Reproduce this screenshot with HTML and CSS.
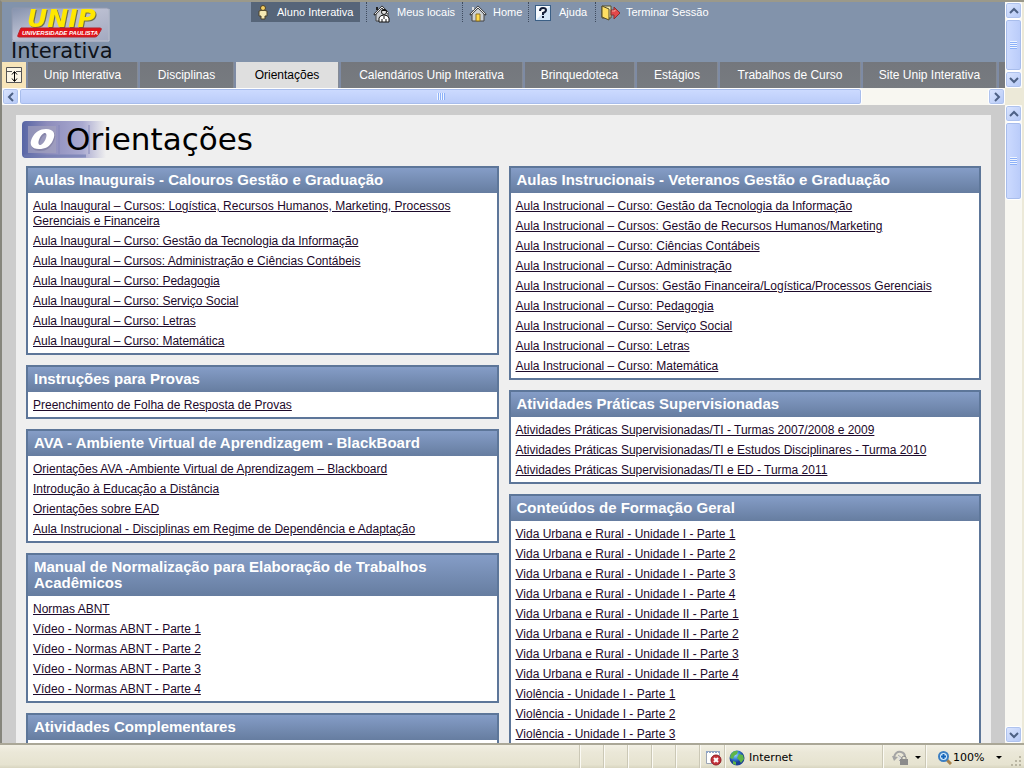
FILE: index.html
```html
<!DOCTYPE html>
<html lang="pt">
<head>
<meta charset="utf-8">
<title>UNIP Interativa - Orientações</title>
<link rel="stylesheet" href="styles.css">
</head>
<body>
<div class="top-frame">
  <div class="top-main">
    <header class="banner">
      <div class="brand">
        <svg class="brand-badge" width="99" height="36" viewBox="0 0 99 36" role="img" aria-label="UNIP Universidade Paulista">
          <defs><linearGradient id="bg1" x1="0" y1="0" x2="1" y2="1"><stop offset="0" stop-color="#8592ad"/><stop offset=".45" stop-color="#bcc0d2"/><stop offset="1" stop-color="#a3a9c0"/></linearGradient></defs>
          <rect x="1" y="1" width="97" height="33" rx="2" fill="url(#bg1)" stroke="#8f97ad"/>
          <path d="M1 34h97V2" fill="none" stroke="#c3c8d6"/>
          <text x="16" y="20" class="unip">UNIP</text>
          <path d="M10 21h79q2 0 1 2l-3 5q-1 2-3 2H8q-2 0-1-2l2-5z" fill="#e11219" stroke="#b5232c"/>
          <text x="11" y="28" class="paulista">UNIVERSIDADE PAULISTA</text>
        </svg>
        <span class="brand-name">Interativa</span>
      </div>
      <nav class="menu">
        <a class="menu-item menu-user" href="#">
          <svg width="12" height="16" viewBox="0 0 12 16"><path d="M2 7q4-2 8 0v5H8v3H4v-3H2z" fill="#f6e9b4" stroke="#4a4028"/><circle cx="6" cy="4" r="2.500" fill="#f5cf62" stroke="#4a4028"/></svg>
          <span>Aluno Interativa</span></a>
        <a class="menu-item menu-places" href="#">
          <svg width="18" height="18" viewBox="0 0 18 18"><path d="M3 8v8h12V8L9 2z" fill="#c9cdd2" stroke="#444"/><path d="M1 10l8-8 6 6" fill="none" stroke="#333" stroke-width="2"/><path d="M2 9l7-7 6 6" fill="none" stroke="#e8e8e8"/><path d="M4 2v3" stroke="#222" stroke-width="2"/><path d="M6 17v-4q1-3 5-3t5 3v4z" fill="#fff" stroke="#111"/><path d="M9 14v3M13 14v3M11 11v3" stroke="#111"/><circle cx="11" cy="7" r="2.500" fill="#e4e4e4" stroke="#111"/><path d="M8 6q3-4 6 0z" fill="#111"/></svg>
          <span>Meus locais</span></a>
        <a class="menu-item menu-home" href="#">
          <svg width="18" height="18" viewBox="0 0 18 18"><path d="M3 8v8h12V8L9 3z" fill="#ccd0d4" stroke="#444"/><path d="M1 10l8-8 8 8" fill="none" stroke="#444" stroke-width="2"/><path d="M2 9l7-7 7 7" fill="none" stroke="#e8e8e8"/><path d="M4 2v3" stroke="#ddd" stroke-width="2"/><path d="M7 9h4v7H7z" fill="#ffd94a" stroke="#8b7025"/></svg>
          <span>Home</span></a>
        <a class="menu-item menu-help" href="#">
          <svg width="16" height="16" viewBox="0 0 16 16"><rect x=".5" y=".5" width="15" height="15" fill="#d3e6f8" stroke="#3b5f85"/><path d="M1 1h14L1 15z" fill="#fff" opacity=".8"/><path d="M5 6q0-3 3-3t3 2q0 2-3 3v2" fill="none" stroke="#111c36" stroke-width="2"/><path d="M7 11h2v2H7z" fill="#111c36"/></svg>
          <span>Ajuda</span></a>
        <a class="menu-item menu-exit" href="#">
          <svg width="20" height="16" viewBox="0 0 20 16"><path d="M1 1h9v12H1z" fill="#eee9b5" stroke="#544c2a"/><path d="M1 1l7 3v11l-7-3z" fill="#ffdf62" stroke="#544c2a"/><path d="M10 5h3V2l6 6-6 6v-4h-3z" fill="#e3484a" stroke="#8a3030"/><path d="M11 6h3V5" fill="none" stroke="#f6aaa0"/></svg>
          <span>Terminar Sessão</span></a>
      </nav>
    </header>
    <nav class="tabs">
      <button class="tab-toggle" aria-label="Alternar cabeçalho"><svg width="18" height="18" viewBox="0 0 18 18"><path d="M1.500 1.500h15v15h-15z" fill="#fbf6e6" stroke="#555"/><path d="M1 5.500h6M11 5.500h6" stroke="#555"/><path d="M9.500 6v9M7 8.500l2.500-3 2.500 3M7 12.500l2.500 3 2.500-3" fill="none" stroke="#000"/></svg></button>
      <a class="tab tab-m" href="#">Unip Interativa</a>
      <a class="tab tab-s" href="#">Disciplinas</a>
      <a class="tab tab-m tab-on" href="#">Orientações</a>
      <a class="tab tab-xl" href="#">Calendários Unip Interativa</a>
      <a class="tab tab-m" href="#">Brinquedoteca</a>
      <a class="tab tab-xs" href="#">Estágios</a>
      <a class="tab tab-l" href="#">Trabalhos de Curso</a>
      <a class="tab tab-ml" href="#">Site Unip Interativa</a>
      <span class="tab-rest"></span>
    </nav>
    <div class="hscroll">
      <button class="sb" aria-label="Esquerda"><svg width="10" height="10" viewBox="0 0 10 10"><path d="M7 1L3 5l4 4"/></svg></button>
      <div class="htrack"><div class="hthumb"><i class="grip grip-h"></i></div></div>
      <button class="sb" aria-label="Direita"><svg width="10" height="10" viewBox="0 0 10 10"><path d="M3 1l4 4-4 4"/></svg></button>
    </div>
  </div>
  <div class="top-side">
    <div class="vscroll">
      <button class="sb" aria-label="Acima"><svg width="10" height="10" viewBox="0 0 10 10"><path d="M1 7l4-4 4 4"/></svg></button>
      <div class="vtrack"><div class="vthumb vthumb-full"><i class="grip"></i></div></div>
      <button class="sb" aria-label="Abaixo"><svg width="10" height="10" viewBox="0 0 10 10"><path d="M1 3l4 4 4-4"/></svg></button>
    </div>
    <div class="corner"></div>
  </div>
</div>
<div class="main-frame">
  <main class="page">
    <div class="sheet">
      <h1 class="title">
        <span class="title-tile"><svg width="84" height="37" viewBox="0 0 84 37"><defs><linearGradient id="bg2"><stop offset="0" stop-color="#5765a5"/><stop offset=".3" stop-color="#8d8cbb"/><stop offset=".72" stop-color="#a9a9d0"/><stop offset="1" stop-color="#efefef"/></linearGradient></defs><path d="M4 0h80v37H4q-4 0-4-4V4q0-4 4-4z" fill="url(#bg2)"/><rect x="6" y="5" width="28" height="27" fill="#a3a1bd" opacity=".7"/><path d="M37 4v29M67 4v29" stroke="#8486b9"/><path d="M2 35h62" stroke="#6c79af" stroke-width="3" opacity=".6"/><path fill-rule="evenodd" fill="#68668c" opacity=".4" d="M25 9c8 0 10 5 7 11-3 7-8 10-14 10-8 0-10-5-7-11 3-7 8-10 14-10zm-2 5c-3 0-8 10-4 11 4 0 8-11 4-11z"/><path fill-rule="evenodd" fill="#fff" d="M24 8c8 0 10 5 7 11-3 7-8 9-14 9-8 0-10-5-7-11 3-6 8-9 14-9zm-1 4c-4 0-9 11-5 12 4 0 9-11 5-12z"/></svg></span>
        <span class="title-text">Orientações</span>
      </h1>
      <div class="columns">
        <div class="column">
          <section class="panel"><h2>Aulas Inaugurais - Calouros Gestão e Graduação</h2><ul>
            <li><a href="#">Aula Inaugural – Cursos: Logística, Recursos Humanos, Marketing, Processos Gerenciais e Financeira</a></li>
            <li><a href="#">Aula Inaugural – Curso: Gestão da Tecnologia da Informação</a></li>
            <li><a href="#">Aula Inaugural – Cursos: Administração e Ciências Contábeis</a></li>
            <li><a href="#">Aula Inaugural – Curso: Pedagogia</a></li>
            <li><a href="#">Aula Inaugural – Curso: Serviço Social</a></li>
            <li><a href="#">Aula Inaugural – Curso: Letras</a></li>
            <li><a href="#">Aula Inaugural – Curso: Matemática</a></li></ul></section>
          <section class="panel"><h2>Instruções para Provas</h2><ul>
            <li><a href="#">Preenchimento de Folha de Resposta de Provas</a></li></ul></section>
          <section class="panel"><h2>AVA - Ambiente Virtual de Aprendizagem - BlackBoard</h2><ul>
            <li><a href="#">Orientações AVA -Ambiente Virtual de Aprendizagem – Blackboard</a></li>
            <li><a href="#">Introdução à Educação a Distância</a></li>
            <li><a href="#">Orientações sobre EAD</a></li>
            <li><a href="#">Aula Instrucional - Disciplinas em Regime de Dependência e Adaptação</a></li></ul></section>
          <section class="panel"><h2>Manual de Normalização para Elaboração de Trabalhos Acadêmicos</h2><ul>
            <li><a href="#">Normas ABNT</a></li>
            <li><a href="#">Vídeo - Normas ABNT - Parte 1</a></li>
            <li><a href="#">Vídeo - Normas ABNT - Parte 2</a></li>
            <li><a href="#">Vídeo - Normas ABNT - Parte 3</a></li>
            <li><a href="#">Vídeo - Normas ABNT - Parte 4</a></li></ul></section>
          <section class="panel panel-tall"><h2>Atividades Complementares</h2><ul></ul></section>
        </div>
        <div class="column">
          <section class="panel"><h2>Aulas Instrucionais - Veteranos Gestão e Graduação</h2><ul>
            <li><a href="#">Aula Instrucional – Curso: Gestão da Tecnologia da Informação</a></li>
            <li><a href="#">Aula Instrucional – Cursos: Gestão de Recursos Humanos/Marketing</a></li>
            <li><a href="#">Aula Instrucional – Curso: Ciências Contábeis</a></li>
            <li><a href="#">Aula Instrucional – Curso: Administração</a></li>
            <li><a href="#">Aula Instrucional – Cursos: Gestão Financeira/Logística/Processos Gerenciais</a></li>
            <li><a href="#">Aula Instrucional – Curso: Pedagogia</a></li>
            <li><a href="#">Aula Instrucional – Curso: Serviço Social</a></li>
            <li><a href="#">Aula Instrucional – Curso: Letras</a></li>
            <li><a href="#">Aula Instrucional – Curso: Matemática</a></li></ul></section>
          <section class="panel"><h2>Atividades Práticas Supervisionadas</h2><ul>
            <li><a href="#">Atividades Práticas Supervisionadas/TI - Turmas 2007/2008 e 2009</a></li>
            <li><a href="#">Atividades Práticas Supervisionadas/TI e Estudos Disciplinares - Turma 2010</a></li>
            <li><a href="#">Atividades Práticas Supervisionadas/TI e ED - Turma 2011</a></li></ul></section>
          <section class="panel"><h2>Conteúdos de Formação Geral</h2><ul>
            <li><a href="#">Vida Urbana e Rural - Unidade I - Parte 1</a></li>
            <li><a href="#">Vida Urbana e Rural - Unidade I - Parte 2</a></li>
            <li><a href="#">Vida Urbana e Rural - Unidade I - Parte 3</a></li>
            <li><a href="#">Vida Urbana e Rural - Unidade I - Parte 4</a></li>
            <li><a href="#">Vida Urbana e Rural - Unidade II - Parte 1</a></li>
            <li><a href="#">Vida Urbana e Rural - Unidade II - Parte 2</a></li>
            <li><a href="#">Vida Urbana e Rural - Unidade II - Parte 3</a></li>
            <li><a href="#">Vida Urbana e Rural - Unidade II - Parte 4</a></li>
            <li><a href="#">Violência - Unidade I - Parte 1</a></li>
            <li><a href="#">Violência - Unidade I - Parte 2</a></li>
            <li><a href="#">Violência - Unidade I - Parte 3</a></li></ul></section>
        </div>
      </div>
    </div>
  </main>
  <div class="vscroll">
    <button class="sb" aria-label="Acima"><svg width="10" height="10" viewBox="0 0 10 10"><path d="M1 7l4-4 4 4"/></svg></button>
    <div class="vtrack"><div class="vthumb"><i class="grip"></i></div></div>
    <button class="sb" aria-label="Abaixo"><svg width="10" height="10" viewBox="0 0 10 10"><path d="M1 3l4 4 4-4"/></svg></button>
  </div>
</div>
<footer class="status">
  <span class="cell"></span><span class="cell"></span><span class="cell"></span><span class="cell"></span><span class="cell"></span>
  <span class="cell cell-block"><svg width="17" height="16" viewBox="0 0 17 16"><path d="M1.500 1.500h13v12h-13z" fill="#fff" stroke="#9aa5b5"/><path d="M1 2h14" stroke="#8fa6c8" stroke-width="2" stroke-dasharray="2 1"/><circle cx="11" cy="10" r="5" fill="#c4343c" stroke="#8f1c22"/><path d="M9 8l4 4M13 8l-4 4" stroke="#fff" stroke-width="2"/></svg></span>
  <span class="cell cell-zone"><svg width="16" height="16" viewBox="0 0 16 16"><defs><radialGradient id="gl" cx=".4" cy=".3"><stop offset="0" stop-color="#9fd4ff"/><stop offset=".5" stop-color="#3d8ee0"/><stop offset="1" stop-color="#1a3f94"/></radialGradient></defs><circle cx="8" cy="8" r="7.500" fill="url(#gl)"/><path d="M2 4q3-4 7-3l-1 3-3 2-1 3-3-1zM10 4l4 1 1 4-3 4-2-3-2-2zM4 11l3 1v3l-3-1z" fill="#5fb548"/></svg><span>Internet</span></span>
  <span class="cell cell-lock"><svg width="18" height="16" viewBox="0 0 18 16"><path d="M2 7q2-6 7-5 4 1 4 5" fill="none" stroke="#a4a4a4" stroke-width="2"/><path d="M0 6l6 1-4 4z" fill="#a4a4a4"/><path d="M6 5l4 3-3 3" fill="#ddd" stroke="#aaa"/><path d="M8 9h8v6H8z" fill="#8b8b8b"/><path d="M10 9V7q2-2 4 0v2" fill="none" stroke="#8b8b8b"/></svg><i class="caret"></i></span>
  <span class="cell cell-zoom"><svg width="14" height="14" viewBox="0 0 14 14"><path d="M8 8l5 5" stroke="#a8824a" stroke-width="3"/><circle cx="5.500" cy="5.500" r="4.500" fill="#d4ecff" stroke="#3c7fc2" stroke-width="2"/><path d="M3 5.500h5M5.500 3v5" stroke="#1464b8" stroke-width="2"/></svg><span>100%</span><i class="caret"></i></span>
  <svg class="resize" width="12" height="12" viewBox="0 0 12 12"><path d="M8 0h2v2H8zM4 4h2v2H4zM8 4h2v2H8zM0 8h2v2H0zM4 8h2v2H4zM8 8h2v2H8z" fill="#b9b5a2"/></svg>
</footer>
</body>
</html>
```
FILE: styles.css
```css
* { box-sizing: border-box; }
body {
  margin: 0; height: 100vh; display: flex; flex-direction: column; overflow: hidden;
  font: 12px/15px "Liberation Sans", Arial, sans-serif; background: #ece9d8;
}
a { color: inherit; text-decoration: none; }
button { padding: 0; border: 0; font: inherit; }
ul { list-style: none; margin: 0; padding: 0; }
h1, h2 { margin: 0; }
svg { display: block; flex: none; }

.top-frame { display: flex; border-top: 2px solid #9b998a; border-left: 2px solid #85857c; padding-right: 2px; flex: none; }
.top-main { flex: 1; min-width: 0; background: #8293ab; }
.top-side { width: 17px; display: flex; flex-direction: column; }
.top-side .vscroll { flex: 1; }
.corner { height: 17px; background: #ece9d8; }

.banner { display: flex; height: 60px; }
.brand { width: 249px; padding: 5px 0 0 9px; }
.brand-badge { overflow: visible; }
.brand-name { display: block; font: 21px/16px "DejaVu Sans", sans-serif; color: #10131a; }
.unip { font: italic bold 25px "DejaVu Sans", sans-serif; fill: #ffe800; filter: drop-shadow(1px 1px 0 #6d6d4a); }
.paulista { font: italic bold 6px "Liberation Sans", sans-serif; fill: #fff; }

.menu { display: flex; align-items: flex-start; color: #fff; font-size: 11px; }
.menu-item { display: flex; gap: 6px; height: 20px; padding-left: 6px; line-height: 20px; white-space: nowrap; }
.menu-item svg { margin-top: 3px; }
.menu-item + .menu-item { border-left: 1px dotted #3f4b5e; }
.menu-user { width: 109px; margin-right: 6px; gap: 8px; background: #566579; }
.menu-user svg { margin-top: 2px; }
.menu-places { width: 96px; }
.menu-home { width: 66px; }
.menu-help { width: 67px; gap: 8px; }
.menu-exit { padding-left: 5px; gap: 5px; }

.tabs { display: flex; gap: 2px; height: 26px; background: #7e8ba4; }
.tab-toggle { width: 24px; display: flex; align-items: center; justify-content: center; background: #f7e5b9; }
.tab {
  line-height: 27px; white-space: nowrap; text-align: center; color: #fff;
  background: linear-gradient(#74777d, #777b80); border-right: 1px solid #858b95;
}
.tab-on { background: #dfdfdf; color: #000; }
.tab-xs { width: 81px; }
.tab-s { width: 94px; }
.tab-m { width: 110px; }
.tab-m.tab-on { width: 103px; }
.tab-ml { width: 134px; }
.tab-l { width: 141px; }
.tab-xl { width: 182px; }
.tab-rest { flex: 1; background: #777a7f; }

.hscroll { display: flex; height: 17px; background: #f8f7f1; }
.htrack { flex: 1; }
.sb {
  width: 17px; height: 17px; flex: none; display: flex; align-items: center; justify-content: center;
  background: linear-gradient(135deg, #dce6ff, #b4c8f6); border: 1px solid #fff; border-radius: 3px;
  box-shadow: inset 0 0 0 1px #afc3ee;
}
.sb path { fill: none; stroke: #4d6185; stroke-width: 2; }
.hthumb, .vthumb {
  display: flex; align-items: center; justify-content: center;
  border: 1px solid #fff; border-radius: 3px; box-shadow: inset 0 0 0 1px #a8bdec;
}
.hthumb { width: 87%; height: 17px; background: linear-gradient(#cddbff, #b9cbf9); }
.vthumb { height: 78px; background: linear-gradient(90deg, #cddbff, #b9cbf9); }
.vthumb-full { height: 100%; }
.grip { width: 7px; height: 8px; background: repeating-linear-gradient(#eef4ff 0 1px, #8cb0f8 1px 2px); }
.grip-h { width: 8px; height: 7px; background: repeating-linear-gradient(90deg, #eef4ff 0 1px, #8cb0f8 1px 2px); }
.vscroll { width: 17px; flex: none; display: flex; flex-direction: column; background: #f8f7f1; }
.vtrack { flex: 1; min-height: 0; }

.main-frame { flex: 1; min-height: 0; display: flex; border-left: 2px solid #85857c; padding-right: 2px; }
.page { flex: 1; min-width: 0; overflow: hidden; background: #ccc; padding: 10px 14px 0; }
.sheet { min-height: 100%; background: #efefef; padding: 6px 10px 10px; }
.title { display: flex; height: 37px; margin: 0 0 8px -4px; font-weight: normal; }
.title-tile { width: 44px; }
.title-text { position: relative; font: 31px/37px "DejaVu Sans", sans-serif; color: #000; }
.columns { display: grid; grid-template-columns: 1fr 1fr; gap: 10px; align-items: start; }
.column { display: grid; gap: 10px; }

.panel { border: 2px solid #5d7699; background: #fff; }
.panel-tall { min-height: 60px; }
.panel h2 {
  padding: 4px 6px 5px; font-size: 15px; line-height: 16px; color: #fff;
  background: linear-gradient(#859dc7, #667da0);
}
.panel ul { padding: 6px 5px 0; }
.panel li { margin-bottom: 5px; }
.panel li:last-child { margin-bottom: 4px; }
.panel a { color: #1d0a2b; text-decoration: underline; }

.status {
  flex: none; display: flex; height: 25px; border-top: 2px solid #aaa797; padding-right: 1px;
  background: linear-gradient(#f2f0e4, #ebe8d8 30%, #e6e3d0 85%, #d8d5c0);
  font-family: "DejaVu Sans", sans-serif; font-size: 11px; color: #000;
  justify-content: flex-end;
}
.cell { display: flex; align-items: center; width: 24px; padding-top: 2px; border-left: 1px solid #cbc8b6; box-shadow: inset 1px 0 #fbfaf4; }
.cell-block { width: 25px; padding-left: 5px; }
.cell-zone { width: 158px; gap: 4px; padding-left: 4px; }
.cell-lock { width: 43px; padding-left: 9px; gap: 5px; }
.cell-zoom { width: 86px; padding-left: 12px; gap: 1px; }
.cell-zoom .caret { margin-left: auto; margin-right: 9px; }
.caret { border: 3px solid transparent; border-top-color: #000; border-bottom: 0; }
.resize { align-self: flex-end; }
```
